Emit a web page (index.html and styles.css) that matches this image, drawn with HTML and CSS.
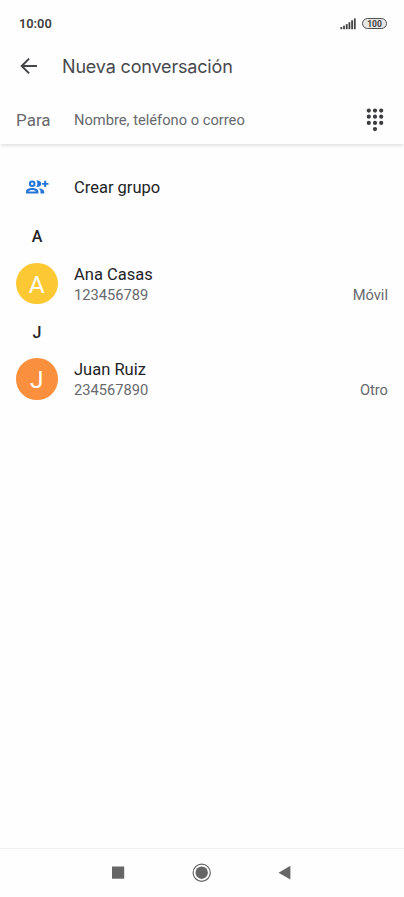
FILE: index.html
```html
<!DOCTYPE html>
<html lang="es">
<head>
  <meta charset="UTF-8">
  <meta name="viewport" content="width=device-width, initial-scale=1.0">
  <title>Nueva conversación</title>
  <link rel="stylesheet" href="styles.css">
</head>
<body>
  <div class="phone">
    <div class="status-bar">
      <span class="time">10:00</span>
      <svg class="signal" width="16" height="12" viewBox="0 0 16 12" fill="#444">
        <rect x="0.4" y="9" width="1.8" height="2.2"/>
        <rect x="3.1" y="7.7" width="1.8" height="3.5"/>
        <rect x="5.8" y="6.1" width="1.8" height="5.1"/>
        <rect x="8.5" y="4.2" width="1.8" height="7"/>
        <rect x="11.2" y="2.3" width="1.8" height="8.9"/>
        <rect x="13.9" y="0.4" width="1.8" height="10.8"/>
      </svg>
      <span class="battery">100</span>
    </div>

    <header class="app-bar">
      <svg class="back" width="18" height="18" viewBox="0 0 18 18" fill="none" stroke="#444548" stroke-width="2">
        <path d="M17 9H2M9.1 1.6L1.7 9l7.4 7.4"/>
      </svg>
      <h1>Nueva conversación</h1>
    </header>

    <div class="to-field">
      <span class="label">Para</span>
      <span class="placeholder">Nombre, teléfono o correo</span>
      <svg class="dialpad" width="18" height="24" viewBox="0 0 18 24" fill="#3c3d40">
        <circle cx="2.8" cy="2.6" r="2.1"/><circle cx="9" cy="2.6" r="2.1"/><circle cx="15.2" cy="2.6" r="2.1"/>
        <circle cx="2.8" cy="8.7" r="2.1"/><circle cx="9" cy="8.7" r="2.1"/><circle cx="15.2" cy="8.7" r="2.1"/>
        <circle cx="2.8" cy="14.9" r="2.1"/><circle cx="9" cy="14.9" r="2.1"/><circle cx="15.2" cy="14.9" r="2.1"/>
        <circle cx="9" cy="21.1" r="2.1"/>
      </svg>
    </div>

    <main>
      <div class="create-group">
        <svg class="group-icon" width="24" height="14" viewBox="0 0 24 14" fill="#2474d8">
          <circle cx="6.2" cy="3.8" r="2.3" fill="none" stroke="#2474d8" stroke-width="2"/>
          <path d="M10.3 .6c3-.4 5 1.1 5 3.2s-2 3.6-5 3.2c1.500-2 1.500-4.400 0-6.400z"/>
          <path d="M18.2 .7h2v2.200h2.300v1.900h-2.300V7h-2V4.800h-2.100V2.900h2.100z"/>
          <path fill-rule="evenodd" d="M0 13.400v-2c0-2.300 3.500-3.400 6.200-3.400s6.200 1.100 6.200 3.400v2zM2.200 11.600h8c-.6-1.100-2.500-1.700-4-1.700s-3.400.6-4 1.700z"/>
          <path d="M12.300 8.200c3.100.3 5.900 1.300 5.900 3.400v1.800h-3.700v-2c0-1.300-.9-2.400-2.200-3.200z"/>
        </svg>
        <span>Crear grupo</span>
      </div>

      <h2>A</h2>
      <div class="contact">
        <div class="avatar yellow">A</div>
        <div class="info">
          <div class="name">Ana Casas</div>
          <div class="number">123456789</div>
        </div>
        <span class="type">Móvil</span>
      </div>

      <h2>J</h2>
      <div class="contact">
        <div class="avatar orange">J</div>
        <div class="info">
          <div class="name">Juan Ruiz</div>
          <div class="number">234567890</div>
        </div>
        <span class="type">Otro</span>
      </div>
    </main>

    <nav class="nav-bar">
      <svg width="20" height="20" viewBox="0 0 20 20" fill="#666"><rect x="4" y="3.5" width="12.2" height="12.2"/></svg>
      <svg width="20" height="20" viewBox="0 0 20 20" fill="#666">
        <circle cx="9.7" cy="9.7" r="8.600" fill="none" stroke="#666" stroke-width="1.2"/>
        <circle cx="9.7" cy="9.7" r="6.2"/>
      </svg>
      <svg width="20" height="20" viewBox="0 0 20 20" fill="#666"><path d="M2.500 9.700L14.400 2.800v13.800z"/></svg>
    </nav>
  </div>
</body>
</html>
```

FILE: styles.css
```css
* {
  box-sizing: border-box;
}

body {
  margin: 0;
  background: #fefefe;
  font-family: Roboto, 'Liberation Sans', sans-serif;
  color: #222326;
}

.phone {
  height: 897px;
  display: flex;
  flex-direction: column;
}

.status-bar {
  height: 48px;
  padding: 0 17px 1px 19px;
  display: flex;
  align-items: center;
  color: #404040;
}

.time {
  flex: 1;
  font-size: 12.8px;
  font-weight: 600;
}

.battery {
  width: 25px;
  height: 11px;
  margin-left: 6px;
  border: 1px solid #505050;
  border-radius: 6px;
  background: #e6e6e6;
  font-size: 8.5px;
  font-weight: 700;
  line-height: 10px;
  text-align: center;
}

.app-bar {
  height: 36px;
  padding-left: 20px;
  display: flex;
  align-items: center;
}

h1 {
  margin: 0 0 0 24px;
  font-family: Inter, Roboto, sans-serif;
  font-size: 18px;
  font-weight: 400;
  letter-spacing: -0.17px;
  color: #48494c;
}

.to-field {
  height: 60px;
  padding: 11px 20px 0 16px;
  display: flex;
  align-items: center;
  color: #67696d;
  box-shadow: 0 3px 3px -1px rgba(0, 0, 0, 0.11);
}

.label {
  width: 58px;
  padding-top: 1px;
  font-size: 17px;
}

.placeholder {
  flex: 1;
  font-size: 14.7px;
}

main {
  flex: 1;
  padding: 19px 16px 0;
}

.create-group {
  height: 48px;
  display: flex;
  align-items: center;
  font-size: 16.5px;
}

.group-icon {
  margin: 0 24px 0 10px;
}

h2 {
  width: 42px;
  height: 48px;
  margin: 0;
  font-size: 16px;
  font-weight: 500;
  line-height: 51px;
  text-align: center;
}

.contact {
  height: 47.5px;
  padding-top: 1px;
  display: flex;
  align-items: center;
}

.avatar {
  width: 41.5px;
  height: 41.5px;
  margin-right: 16.5px;
  border-radius: 50%;
  color: #fff;
  font-size: 24.5px;
  line-height: 43px;
  text-align: center;
}

.yellow {
  background: #fcc934;
}

.orange {
  background: #fa903e;
}

.info {
  flex: 1;
  padding-top: 3px;
}

.name {
  font-size: 16.5px;
  line-height: 21px;
}

.number,
.type {
  font-size: 14.7px;
  line-height: 21px;
  color: #67696d;
}

.type {
  align-self: flex-end;
  margin-bottom: 1px;
}

.nav-bar {
  height: 49px;
  padding: 0 108px;
  display: flex;
  justify-content: space-between;
  align-items: center;
  border-top: 1px solid #f1f1f1;
}
```
